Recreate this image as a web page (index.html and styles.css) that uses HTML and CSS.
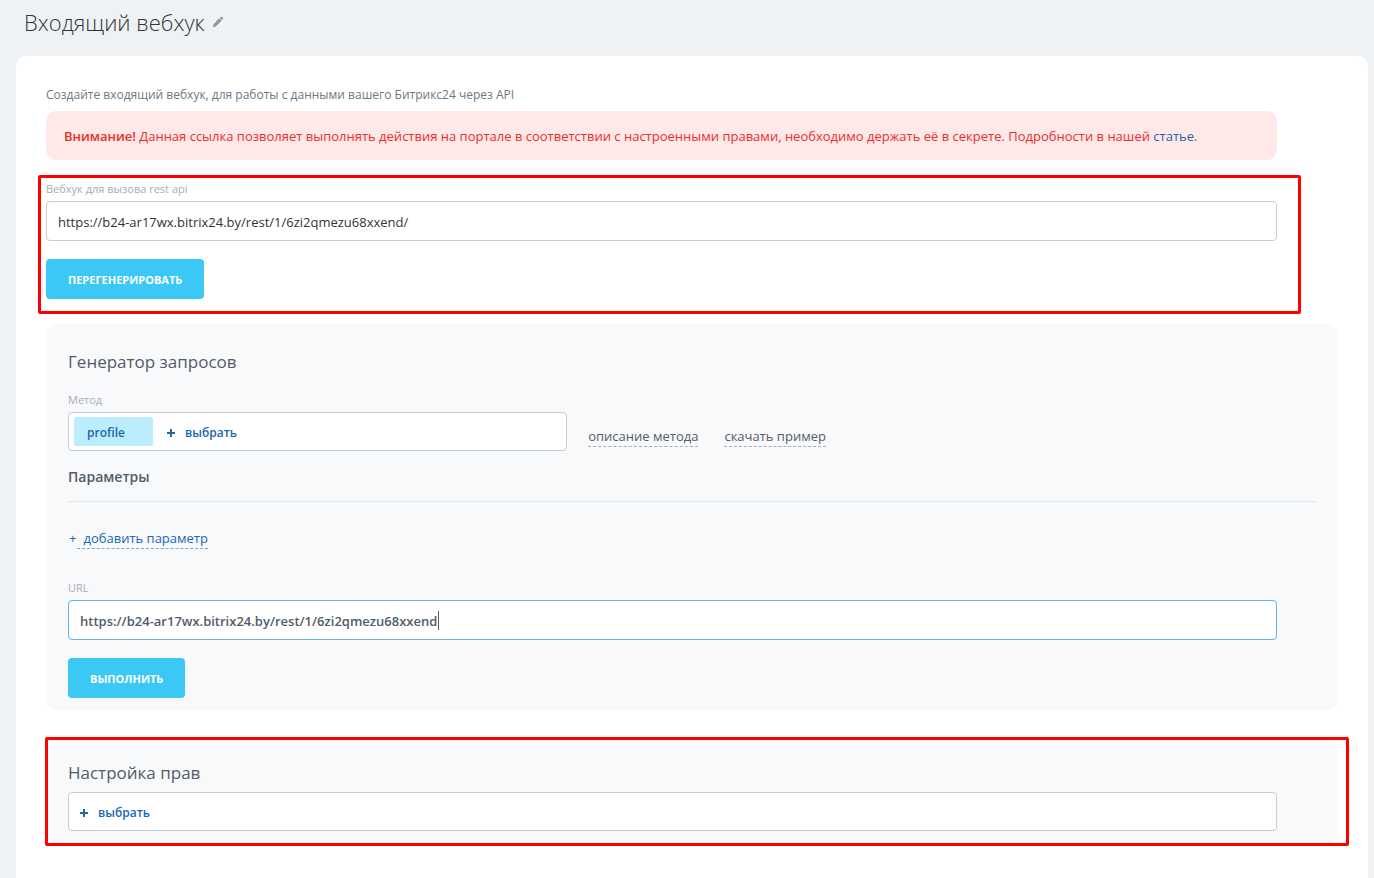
FILE: index.html
```html
<!DOCTYPE html>
<html lang="ru">
<head>
<meta charset="utf-8">
<meta name="viewport" content="width=device-width, initial-scale=1">
<title>Входящий вебхук</title>
<link rel="stylesheet" href="styles.css">
</head>
<body class="page">
<header class="page-header">
  <h1 class="page-title">Входящий вебхук</h1>
  <button class="edit-button" type="button" aria-label="Изменить название">
    <svg width="12" height="12" viewBox="0 0 12 12" aria-hidden="true"><path d="M.8 11.200l.8-3L7.300 2.300l2.300 2.300L3.900 10.400zM7.900 1.800l.9-.9q.7-.5 1.300 0l.9.9q.5.600 0 1.300l-.9.9z" fill="#8f979f"/></svg>
  </button>
</header>
<main class="card">
  <section class="intro">
    <p class="intro-text">Создайте входящий вебхук, для работы с данными вашего Битрикс24 через API</p>
    <p class="alert"><strong>Внимание!</strong> Данная ссылка позволяет выполнять действия на портале в соответствии с настроенными правами, необходимо держать её в секрете. Подробности в нашей <a class="alert-link" href="#">статье</a>.</p>
  </section>
  <section class="webhook">
    <label class="label" for="hook">Вебхук для вызова rest api</label>
    <input class="input" id="hook" type="text" value="https://b24-ar17wx.bitrix24.by/rest/1/6zi2qmezu68xxend/">
    <button class="button" type="button">Перегенерировать</button>
  </section>
  <section class="panel generator">
    <h2 class="panel-title">Генератор запросов</h2>
    <div class="label method-label">Метод</div>
    <div class="method-row">
      <div class="selector method-selector">
        <span class="tag">profile</span>
        <button class="select-button" type="button"><span class="plus"></span>выбрать</button>
      </div>
      <div class="method-links">
        <a class="dashed-link" href="#">описание метода</a>
        <a class="dashed-link" href="#">скачать пример</a>
      </div>
    </div>
    <h3 class="params-title">Параметры</h3>
    <div class="add-row"><span class="add-plus">+</span><a class="dashed-link add-link" href="#">добавить параметр</a></div>
    <div class="field">
      <label class="label" for="url">URL</label>
      <input class="input input-active" id="url" type="text" value="https://b24-ar17wx.bitrix24.by/rest/1/6zi2qmezu68xxend">
      <button class="button" type="button">Выполнить</button>
    </div>
  </section>
  <section class="panel rights">
    <h2 class="panel-title">Настройка прав</h2>
    <div class="selector rights-selector">
      <button class="select-button" type="button"><span class="plus"></span>выбрать</button>
    </div>
  </section>
</main>
</body>
</html>
```

FILE: styles.css
```css
*, *::before, *::after { box-sizing: border-box; }

.page {
  min-height: 100vh;
  margin: 0;
  padding: 0 6px 0 16px;
  display: flex;
  flex-direction: column;
  background: #eef2f4;
  color: #525c69;
  font-family: "Open Sans", "Noto Sans", sans-serif;
  font-size: 13px;
  line-height: 20px;
}

.page a { text-decoration: none; }
.page button, .page input { font-family: inherit; }

.page-header {
  display: flex;
  align-items: center;
  gap: 7px;
  height: 56px;
  padding: 0 8px 13px;
}

.page-title {
  margin: 0;
  color: #333;
  font-size: 22px;
  font-weight: 300;
  line-height: 32px;
}

.edit-button {
  display: flex;
  padding: 0;
  border: 0;
  background: none;
}

.card {
  flex: 1;
  padding: 29px 30px 32px;
  border-radius: 10px 10px 0 0;
  background: #fff;
}

.intro, .webhook { margin-right: 61px; }

.intro-text {
  margin: 0 0 6px;
  color: #6f7782;
  font-size: 12px;
}

.alert {
  margin: 0;
  padding: 15px 18px 14px;
  border-radius: 10px;
  background: #ffe8e8;
  color: #e92f2a;
  font-size: 13px;
}

.alert strong { font-weight: 600; }
.alert-link { color: #2066b0; }

.webhook {
  position: relative;
  padding-top: 19px;
}

/* Highlight frames drawn over the sections */
.webhook::after, .rights::after {
  content: "";
  position: absolute;
  border: 3px solid #f00;
  border-radius: 2px;
  pointer-events: none;
}

.webhook::after { inset: 15px -24px -15px -8px; }
.rights::after { inset: -1px -11px -3px -1px; }

.label {
  display: block;
  margin-bottom: 2px;
  color: #a8adb4;
  font-size: 11px;
}

.input {
  display: block;
  width: 100%;
  height: 40px;
  margin-bottom: 18px;
  padding: 1px 11px 0;
  border: 1px solid #c6cdd3;
  border-radius: 4px;
  background: #fff;
  color: #333;
  font-size: 13px;
}

.input-active {
  border-color: #66afe9;
  background: linear-gradient(#525c69, #525c69) 369px 10px / 1px 19px no-repeat #fff;
  color: #525c69;
  font-weight: 600;
  outline: 0;
}

.button {
  display: block;
  height: 40px;
  padding: 1px 22px 0;
  border: 0;
  border-radius: 4px;
  background: #3bc8f5;
  color: #fff;
  font-size: 11px;
  font-weight: 700;
  text-transform: uppercase;
}

.panel {
  padding: 0 22px 12px;
  border-radius: 10px;
  background: #f8f9fb;
}

.generator { margin-top: 25px; padding-top: 26px; }

.panel-title {
  margin: 0;
  color: #525c69;
  font-size: 17px;
  font-weight: 400;
  line-height: 24px;
}

.method-label { margin-top: 16px; }

.method-row { display: flex; gap: 21px; }

.selector {
  display: flex;
  align-items: center;
  height: 39px;
  border: 1px solid #c6cdd3;
  border-radius: 4px;
  background: #fff;
}

.method-selector {
  flex: 0 0 40%;
  gap: 14px;
  padding: 0 5px;
}

.tag {
  width: 79px;
  height: 29px;
  padding: 2px 13px 0;
  border-radius: 2px;
  background: #bcedfc;
  color: #2067b0;
  font-size: 12px;
  font-weight: 600;
  line-height: 28px;
}

.select-button {
  display: flex;
  align-items: center;
  gap: 10px;
  padding: 2px 0 0;
  border: 0;
  background: none;
  color: #2067b0;
  font-size: 12px;
  font-weight: 600;
  line-height: 20px;
}

.plus {
  width: 8px;
  height: 8px;
  background:
    linear-gradient(#2067b0, #2067b0) center / 8px 2px no-repeat,
    linear-gradient(#2067b0, #2067b0) center / 2px 8px no-repeat;
}

.method-links {
  display: flex;
  align-items: flex-end;
  gap: 26px;
  padding-bottom: 4px;
}

.dashed-link {
  border-bottom: 1px dashed #a8adb8;
  color: #535c69;
  font-size: 13px;
  line-height: 19px;
}

.params-title {
  margin: 15px 0 27px;
  padding-bottom: 13px;
  border-bottom: 1px solid #e5e8eb;
  color: #525c69;
  font-size: 14px;
  font-weight: 600;
  line-height: 22px;
}

.add-row {
  display: flex;
  color: #2067b0;
}

.add-plus { padding: 0 1px; line-height: 19px; }

.add-link {
  padding-left: 6px;
  border-color: #79a7d6;
  color: #2067b0;
}

.field { margin: 29px 39px 0 0; }

.rights {
  position: relative;
  margin-top: 28px;
  padding-top: 23px;
}

.rights-selector {
  margin: 7px 39px 0 0;
  padding: 0 11px;
}
```
